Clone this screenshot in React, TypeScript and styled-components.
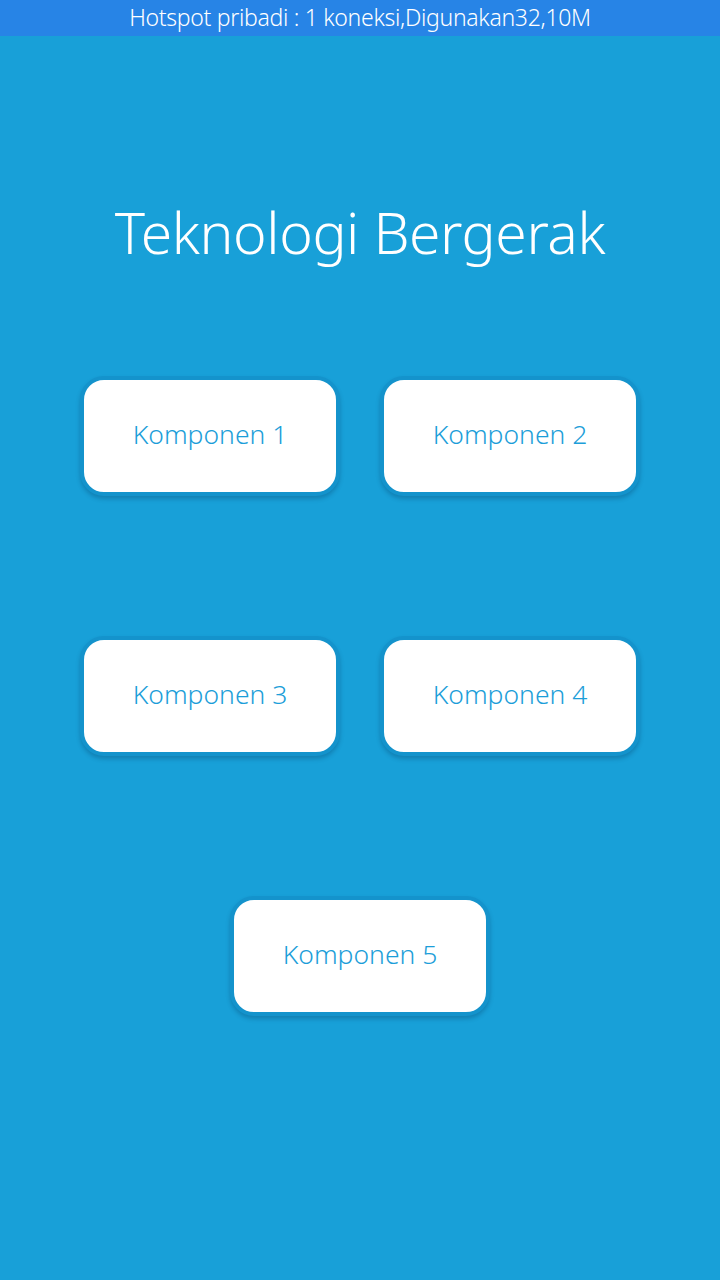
import React from "react";
import styled, { createGlobalStyle } from "styled-components";

const Global = createGlobalStyle`
  html, body { margin: 0; padding: 0; background: #18a0d8; }
  body { font-family: "Noto Sans", "Open Sans", sans-serif; }
`;

const Screen = styled.div`
  width: 720px;
  height: 1280px;
  background: #18a0d8;
  display: flex;
  flex-direction: column;
  align-items: center;
`;

const StatusBar = styled.div`
  width: 100%;
  height: 36px;
  box-sizing: border-box;
  padding-bottom: 3px;
  background: #2784e6;
  color: #fff;
  font-size: 23px;
  font-weight: 300;
  display: flex;
  align-items: center;
  justify-content: center;
  letter-spacing: -0.3px;
`;

const Title = styled.h1`
  margin: 156px 0 0;
  font-weight: 300;
  font-size: 57px;
  line-height: 80px;
  color: #fff;
  letter-spacing: -0.4px;
`;

const Grid = styled.div`
  margin-top: 104px;
  display: grid;
  grid-template-columns: 260px 260px;
  column-gap: 40px;
  row-gap: 140px;
  justify-items: center;
`;

const Card = styled.button<{ $wide?: boolean }>`
  grid-column: ${(p) => (p.$wide ? "1 / span 2" : "auto")};
  width: 260px;
  height: 120px;
  box-sizing: border-box;
  border: 4px solid #1493cc;
  border-radius: 24px;
  background: #fff;
  box-shadow: 0 3px 4px rgba(0, 50, 90, 0.28);
  color: #1c9ed9;
  font-family: "Noto Sans", "Open Sans", sans-serif;
  font-size: 26.5px;
  font-weight: 300;
  padding: 0 0 4px;
  cursor: pointer;
`;

export default function App() {
  return (
    <Screen>
      <Global />
      <StatusBar>Hotspot pribadi : 1 koneksi,Digunakan32,10M</StatusBar>
      <Title>Teknologi Bergerak</Title>
      <Grid>
        <Card>Komponen 1</Card>
        <Card>Komponen 2</Card>
        <Card>Komponen 3</Card>
        <Card>Komponen 4</Card>
        <Card $wide>Komponen 5</Card>
      </Grid>
    </Screen>
  );
}
